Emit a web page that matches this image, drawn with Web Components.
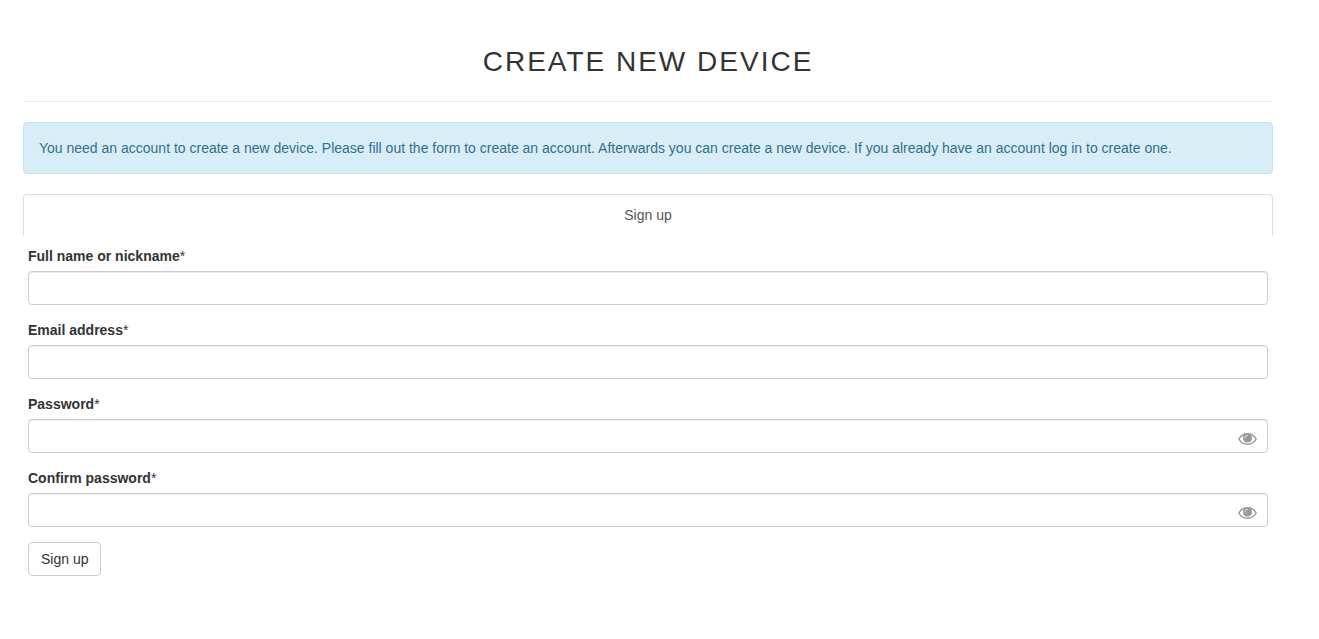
<!DOCTYPE html>
<html lang="en">
<head>
<meta charset="utf-8">
<title>Create new device</title>
<style>
html, body { margin: 0; background: #fff; }
body { font: 14px/20px "Liberation Sans", Arial, sans-serif; color: #333; }
</style>
</head>
<body>
<device-page></device-page>

<template id="page-tpl">
<style>
:host { display: block; padding: 44px 46px 44px 23px; }
h1 { margin: 0 0 20px; padding-bottom: 21px; border-bottom: 1px solid #eee; font-size: 28px; line-height: 36px; font-weight: 400; letter-spacing: 2px; text-transform: uppercase; text-align: center; }
form { display: flex; flex-direction: column; align-items: stretch; gap: 15px; padding: 10px 5px 0; }
</style>
<main>
<h1>Create new device</h1>
<info-alert>You need an account to create a new device. Please fill out the form to create an account. Afterwards you can create a new device. If you already have an account log in to create one.</info-alert>
<nav-tab>Sign up</nav-tab>
<form>
<form-field label="Full name or nickname" type="text"></form-field>
<form-field label="Email address" type="email"></form-field>
<form-field label="Password" type="password"></form-field>
<form-field label="Confirm password" type="password"></form-field>
<submit-button>Sign up</submit-button>
</form>
</main>
</template>

<template id="alert-tpl">
<style>
:host { display: block; padding: 15px; margin-bottom: 20px; border: 1px solid #bce8f1; border-radius: 4px; background: #d9edf7; color: #31708f; }
</style>
<slot></slot>
</template>

<template id="tab-tpl">
<style>
:host { display: block; }
a { display: block; padding: 10px 15px; border: 1px solid #ddd; border-bottom-color: transparent; border-radius: 4px 4px 0 0; color: #555; text-align: center; text-decoration: none; }
</style>
<a href="#signup"><slot></slot></a>
</template>

<template id="field-tpl">
<style>
:host { display: block; }
label { display: block; margin-bottom: 5px; }
.control { display: grid; align-items: center; }
input { grid-area: 1 / 1; box-sizing: border-box; width: 100%; min-width: 0; height: 34px; padding: 6px 12px; border: 1px solid #ccc; border-radius: 4px; background: #fff; color: #555; font: inherit; box-shadow: inset 0 1px 1px rgba(0,0,0,.075); }
input:focus { outline: 0; border-color: #66afe9; }
button { grid-area: 1 / 1; justify-self: end; display: flex; margin: 5px 11px 0 0; padding: 0; border: 0; background: none; color: #999; cursor: pointer; }
button[hidden] { display: none; }
svg { display: block; }
</style>
<label for="input"><b></b>*</label>
<div class="control">
<input id="input" required>
<button type="button" aria-label="Show password" hidden>
<svg width="19" height="14" viewBox="0 0 19 14" fill="none" stroke-linecap="round">
<path d="M.8 7C2.800 3.500 6 1.700 9.500 1.700S16.200 3.500 18.200 7C16.200 10.500 13 12.300 9.500 12.300S2.800 10.500.8 7z" stroke="currentColor" stroke-width="1.500" stroke-linejoin="round"/>
<circle cx="9.500" cy="6" r="4.600" fill="currentColor"/>
<path d="M6.900 6C6.900 4.500 7.900 3.400 9.400 3.400" stroke="#fff" stroke-width=".8"/>
</svg>
</button>
</div>
</template>

<template id="button-tpl">
<style>
:host { display: block; }
button { padding: 6px 12px; border: 1px solid #ccc; border-radius: 4px; background: #fff; color: #333; font: inherit; cursor: pointer; }
</style>
<button type="submit"><slot></slot></button>
</template>

<script>
class TemplateElement extends HTMLElement {
  constructor() {
    super();
    this.attachShadow({ mode: "open" }).append(
      document.getElementById(this.constructor.template).content.cloneNode(true));
  }
}
customElements.define("info-alert", class extends TemplateElement { static template = "alert-tpl"; });
customElements.define("nav-tab", class extends TemplateElement { static template = "tab-tpl"; });
customElements.define("submit-button", class extends TemplateElement { static template = "button-tpl"; });
customElements.define("form-field", class extends TemplateElement {
  static template = "field-tpl";
  connectedCallback() {
    const input = this.shadowRoot.querySelector("input");
    const toggle = this.shadowRoot.querySelector("button");
    this.shadowRoot.querySelector("b").textContent = this.getAttribute("label");
    input.type = this.getAttribute("type");
    toggle.hidden = input.type !== "password";
    toggle.onclick = () => { input.type = input.type === "password" ? "text" : "password"; };
  }
});
customElements.define("device-page", class extends TemplateElement { static template = "page-tpl"; });
</script>
</body>
</html>
